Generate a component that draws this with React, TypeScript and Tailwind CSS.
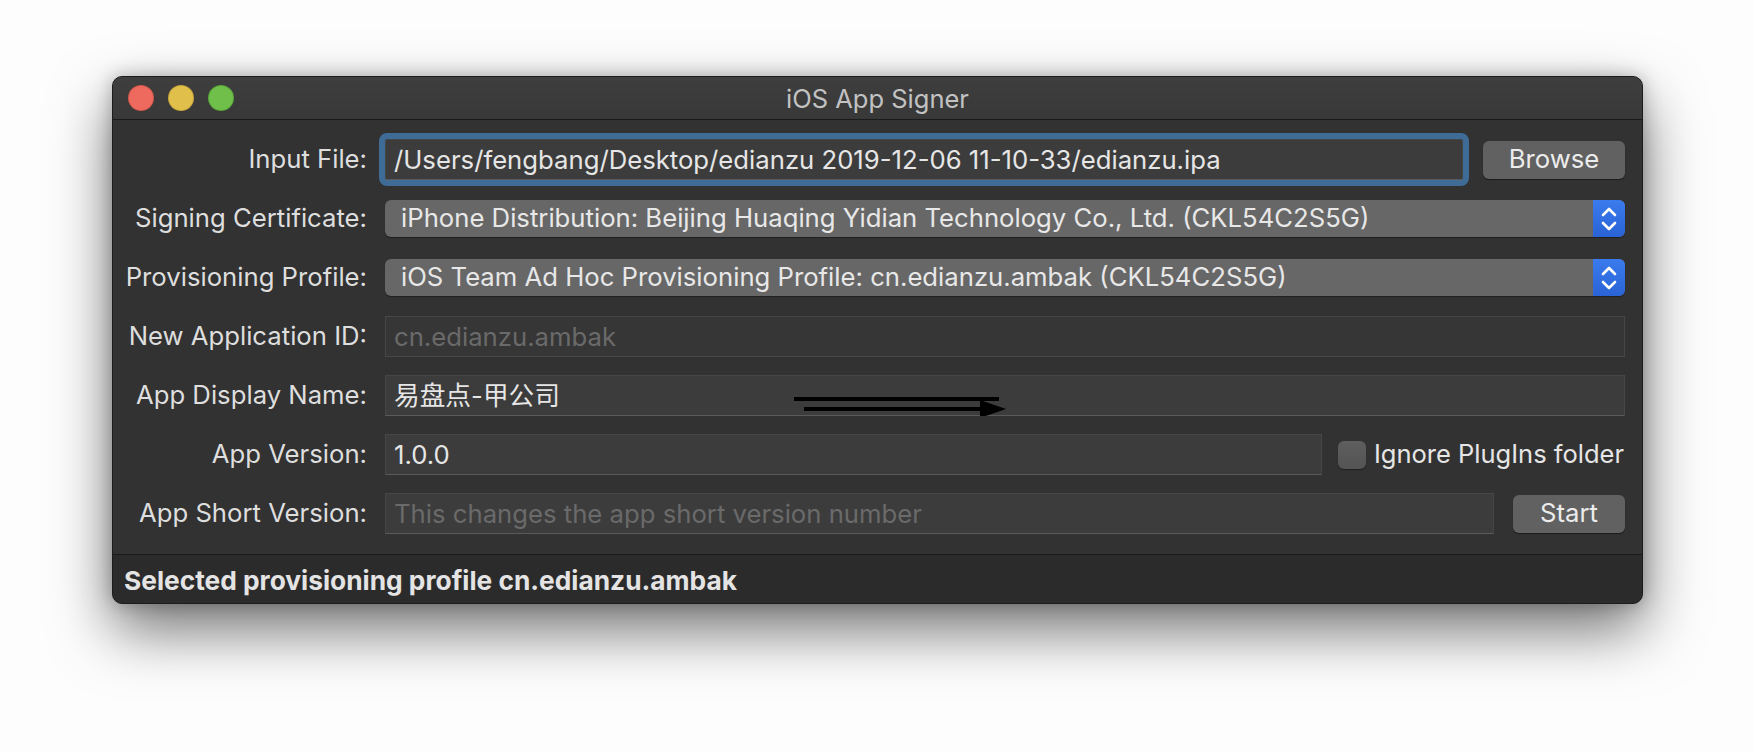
import React from "react";

const font = { fontFamily: '"Inter", "Noto Sans CJK SC", sans-serif' };

function Label({ children }: { children: React.ReactNode }) {
  return <div className="text-right text-[25.7px] text-[#dedede] whitespace-nowrap">{children}</div>;
}

function TextField({ value, placeholder, className = "" }: { value?: string; placeholder?: string; className?: string }) {
  return (
    <div
      className={`flex h-[41px] items-center border border-[#464646] border-b-[#5a5a5a] bg-[#3c3c3c] px-[8px] pt-[2px] text-[25.7px] whitespace-nowrap ${className}`}
    >
      {value ? <span className="text-[#e6e6e6]">{value}</span> : <span className="text-[#6a6a6a]">{placeholder}</span>}
    </div>
  );
}

function Popup({ value }: { value: string }) {
  return (
    <div className="flex h-[37px] items-stretch overflow-hidden rounded-[6px] bg-[#676767] shadow-[0_1px_1px_rgba(0,0,0,0.4)]">
      <div className="flex flex-1 items-center pl-[16px] text-[25.7px] text-[#e8e8e8] whitespace-nowrap">{value}</div>
      <div className="flex w-[32px] items-center justify-center bg-gradient-to-b from-[#3a7bee] to-[#2a63d6]">
        <svg width="18" height="28" viewBox="0 0 18 28" fill="none" stroke="#ffffff" strokeWidth="2.6" strokeLinecap="round" strokeLinejoin="round">
          <path d="M3 10 L9 4 L15 10" />
          <path d="M3 18 L9 24 L15 18" />
        </svg>
      </div>
    </div>
  );
}

function Button({ children, className = "" }: { children: React.ReactNode; className?: string }) {
  return (
    <div
      className={`flex h-[38px] items-center justify-center rounded-[6px] bg-[#616161] text-[25.7px] text-[#ececec] shadow-[0_1px_1px_rgba(0,0,0,0.45)] ${className}`}
    >
      {children}
    </div>
  );
}

export default function App() {
  return (
    <div className="h-[752px] w-[1754px] bg-[#fdfdfd] pl-[112px] pt-[76px]" style={font}>
      <div className="relative flex h-[528px] w-[1531px] flex-col overflow-hidden rounded-[10px] border border-[#1c1c1c] bg-[#323232] shadow-[0_26px_60px_rgba(0,0,0,0.55),0_0_18px_rgba(0,0,0,0.25)]">
        {/* title bar */}
        <div className="relative flex h-[43px] shrink-0 items-center justify-center border-b border-[#1a1a1a] bg-gradient-to-b from-[#3e3e3e] to-[#383838]">
          <div className="absolute left-[16px] top-[9px] flex gap-[16px]">
            <span className="h-[24px] w-[24px] rounded-full bg-[#ee6a5e] ring-1 ring-[#d1584d]" />
            <span className="h-[24px] w-[24px] rounded-full bg-[#e1bf4b] ring-1 ring-[#c9a73a]" />
            <span className="h-[24px] w-[24px] rounded-full bg-[#6fbf4a] ring-1 ring-[#5aa63a]" />
          </div>
          <span className="pt-[2px] text-[25.5px] text-[#c2c2c2]">iOS App Signer</span>
        </div>

        {/* form */}
        <div className="grid h-[434px] shrink-0 auto-rows-[59px] grid-cols-[254px_1fr] items-center gap-x-[18px] pr-[17px] pt-[10px]">
          <Label>Input File:</Label>
          <div className="flex items-center gap-[20px]">
            <div className="flex-1 rounded-[2px] outline-[6px] outline-solid outline-[#3f6b97]">
              <TextField value="/Users/fengbang/Desktop/edianzu 2019-12-06 11-10-33/edianzu.ipa" className="border-[#5d7ea0]" />
            </div>
            <Button className="w-[142px]">Browse</Button>
          </div>

          <Label>Signing Certificate:</Label>
          <Popup value="iPhone Distribution: Beijing Huaqing Yidian Technology Co., Ltd. (CKL54C2S5G)" />

          <Label>Provisioning Profile:</Label>
          <Popup value="iOS Team Ad Hoc Provisioning Profile: cn.edianzu.ambak (CKL54C2S5G)" />

          <Label>New Application ID:</Label>
          <TextField placeholder="cn.edianzu.ambak" className="bg-[#363636] border-[#3e3e3e] border-b-[#474747]" />

          <Label>App Display Name:</Label>
          <div className="relative">
            <TextField value="易盘点-甲公司" />
            <svg className="absolute left-[409px] top-[19px]" width="214" height="22" viewBox="0 0 214 22">
              <rect x="0" y="3" width="205" height="4" fill="#000" />
              <rect x="10" y="13" width="180" height="4" fill="#000" />
              <path d="M186 6 L212 15 L186 24 Z" fill="#000" />
            </svg>
          </div>

          <Label>App Version:</Label>
          <div className="flex items-center">
            <TextField value="1.0.0" className="w-[937px]" />
            <span className="ml-[16px] h-[28px] w-[28px] rounded-[6px] bg-gradient-to-b from-[#5e5e5e] to-[#545454] shadow-[0_1px_1px_rgba(0,0,0,0.4)]" />
            <span className="ml-[8px] text-[25.5px] text-[#e6e6e6] whitespace-nowrap">Ignore PlugIns folder</span>
          </div>

          <Label>App Short Version:</Label>
          <div className="flex items-center gap-[19px]">
            <TextField placeholder="This changes the app short version number" className="flex-1" />
            <Button className="w-[112px]">Start</Button>
          </div>
        </div>

        {/* status */}
        <div className="flex flex-1 items-center border-t border-[#1b1b1b] bg-[#2b2b2b] pl-[11px] pt-[4px]">
          <span className="text-[26.3px] font-bold text-[#e4e4e4]">Selected provisioning profile cn.edianzu.ambak</span>
        </div>
      </div>
    </div>
  );
}
